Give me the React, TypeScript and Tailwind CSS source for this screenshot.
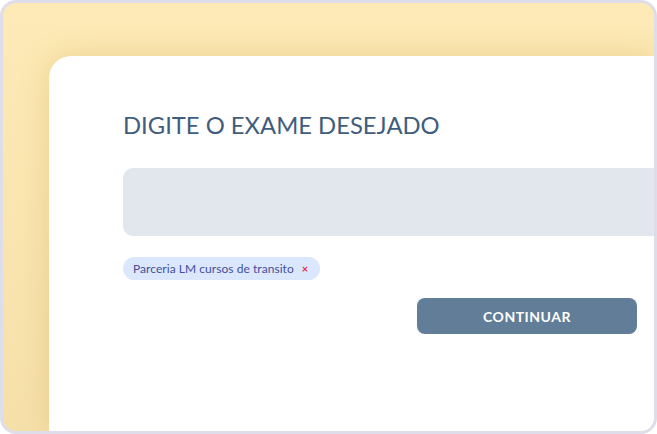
import React from "react";

export default function App() {
  return (
    <div className="w-[657px] h-[434px] bg-white">
      {/* Outer frame */}
      <div className="w-full h-full border-[3px] border-[#dfdde9] rounded-[16px] overflow-hidden bg-gradient-to-b from-[#fdeab6] to-[#f6e0aa] flex flex-col pt-[53px] pl-[46px]">
        {/* White card */}
        <div
          className="flex-1 bg-white rounded-tl-[22px] shadow-[0_0_28px_rgba(190,150,50,0.28)] flex flex-col pl-[74px] pt-[54px]"
          style={{ fontFamily: "Lato, 'Open Sans', sans-serif" }}
        >
          <h1 className="text-[23.8px] leading-[30px] text-[#415d7e]">
            DIGITE O EXAME DESEJADO
          </h1>

          <div className="mt-[28px] h-[68px] bg-[#e2e7ee] rounded-l-[10px]" />

          <div className="mt-[21px] flex">
            <span className="h-[23px] flex items-center gap-[8px] pl-[10px] pr-[12px] rounded-full bg-[#dbe7fd] text-[12px] text-[#43509c] tracking-[0.05px]">
              Parceria LM cursos de transito
              <span className="text-[#e0304a] text-[11px] font-bold leading-none">×</span>
            </span>
          </div>

          <button className="mt-[18px] self-end mr-[17px] w-[220px] h-[36px] rounded-[8px] bg-[#627d98] text-white text-[14px] font-bold tracking-[0.5px]">
            CONTINUAR
          </button>
        </div>
      </div>
    </div>
  );
}
